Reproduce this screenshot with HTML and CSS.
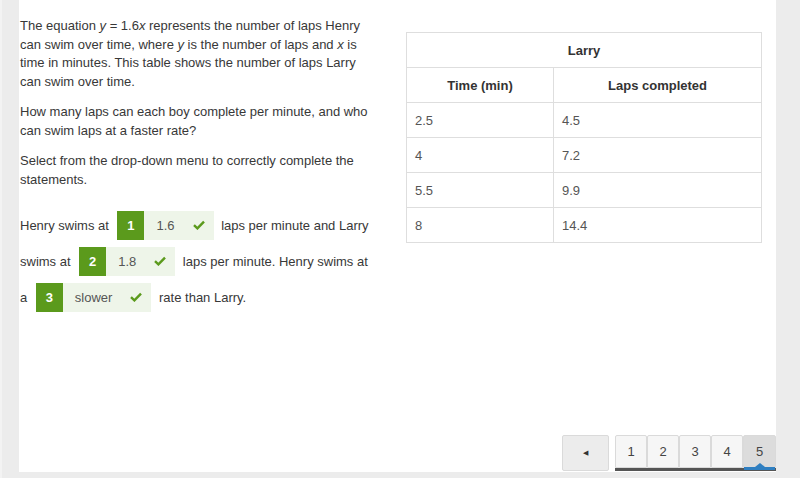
FILE: index.html
```html
<!DOCTYPE html>
<html lang="en">
<head>
  <meta charset="UTF-8" />
  <title>Swim Laps</title>
  <link rel="stylesheet" href="styles.css">
</head>
<body>
  <div class="page">
    <div class="gutter-left"></div>
    <div class="main">
      <div class="content">
        <div class="question">
          <p>The equation <i>y</i> = 1.6<i>x</i> represents the number of laps Henry can swim over time, where <i>y</i> is the number of laps and <i>x</i> is time in minutes. This table shows the number of laps Larry can swim over time.</p>
          <p>How many laps can each boy complete per minute, and who can swim laps at a faster rate?</p>
          <p>Select from the drop-down menu to correctly complete the statements.</p>
          <p class="answers">Henry swims at <span class="drop"><span class="num">1</span><span class="val">1.6<svg class="check" viewBox="0 0 12 10"><path d="M1 5.2 L4.4 8.4 L11 1.6" /></svg></span></span> laps per minute and Larry swims at <span class="drop"><span class="num">2</span><span class="val">1.8<svg class="check" viewBox="0 0 12 10"><path d="M1 5.2 L4.4 8.4 L11 1.6" /></svg></span></span> laps per minute. Henry swims at a <span class="drop"><span class="num">3</span><span class="val">slower<svg class="check" viewBox="0 0 12 10"><path d="M1 5.2 L4.4 8.4 L11 1.6" /></svg></span></span> rate than Larry.</p>
        </div>
        <div class="table-box">
          <table>
            <tr><th colspan="2">Larry</th></tr>
            <tr><th class="col1">Time (min)</th><th>Laps completed</th></tr>
            <tr><td>2.5</td><td>4.5</td></tr>
            <tr><td>4</td><td>7.2</td></tr>
            <tr><td>5.5</td><td>9.9</td></tr>
            <tr><td>8</td><td>14.4</td></tr>
          </table>
        </div>
      </div>
      <div class="pager">
        <button class="prev">&#9664;</button>
        <div class="pages">
          <button>1</button>
          <button>2</button>
          <button>3</button>
          <button>4</button>
          <button class="active">5</button>
        </div>
      </div>
    </div>
    <div class="gutter-right"></div>
  </div>
</body>
</html>
```

FILE: styles.css
```css
* {
  box-sizing: border-box;
}
body {
  margin: 0;
  background: #ececec;
  font-family: "Liberation Sans", Arial, sans-serif;
  font-size: 13px;
  color: #383838;
}
.page {
  display: flex;
  height: 478px;
}
.gutter-left {
  width: 19px;
  border-left: 2px solid #f3f3f3;
}
.gutter-right {
  width: 24px;
}
.main {
  flex: 1;
  height: 472px;
  background: #fff;
  display: flex;
  flex-direction: column;
}
.content {
  display: flex;
  padding: 17px 14px 0 1px;
}
.question {
  width: 356px;
  margin-right: 4px;
  line-height: 18.5px;
}
.question p {
  margin: 0 0 12px;
}
.question p.answers {
  margin-top: 19px;
  line-height: 36px;
}
.drop {
  display: inline-flex;
  vertical-align: middle;
  height: 29px;
  line-height: 29px;
  margin: 0 4px 3px 5px;
}
.num {
  width: 27px;
  background: #5b9a1c;
  color: #fff;
  text-align: center;
  font-weight: bold;
}
.val {
  display: flex;
  align-items: center;
  gap: 18px;
  background: #eef5e9;
  color: #555;
  padding: 0 9px 0 12px;
}
.check {
  width: 12px;
  height: 10px;
}
.check path {
  fill: none;
  stroke: #5b9a1c;
  stroke-width: 2.4;
}
.table-box {
  flex: 1;
  margin: 15px 0 0 26px;
}
table {
  width: 100%;
  border-collapse: collapse;
}
th, td {
  border: 1px solid #dedede;
  height: 35px;
  padding: 0 8px;
}
th {
  font-weight: bold;
  text-align: center;
  color: #333;
}
th.col1 {
  width: 147px;
}
td {
  color: #555;
}
.pager {
  margin-top: auto;
  display: flex;
  justify-content: flex-end;
  gap: 6px;
  padding-bottom: 1px;
}
.pager button {
  font-family: inherit;
  font-size: 13px;
  color: #444;
  height: 36px;
  border: 1px solid #dadada;
  border-radius: 2px;
  background: #f6f6f6;
  padding: 0;
  cursor: pointer;
}
.pager .prev {
  width: 47px;
  background: #ececec;
  font-size: 7px;
  color: #333;
}
.pages {
  display: flex;
  border-bottom: 3px solid #555;
}
.pages button {
  width: 32px;
  height: 33px;
  border-radius: 2px 2px 0 0;
}
.pages button.active {
  width: 33px;
  background: #dcdcdc;
  position: relative;
}
.pages button.active::after {
  content: "";
  position: absolute;
  left: 0;
  right: 0;
  bottom: -3px;
  height: 3px;
  background: #2f7fc1;
}
.pages button.active::before {
  content: "";
  position: absolute;
  left: 50%;
  bottom: 0;
  margin-left: -5px;
  border: 5px solid transparent;
  border-bottom: 4px solid #2f7fc1;
  border-top: 0;
}
```
